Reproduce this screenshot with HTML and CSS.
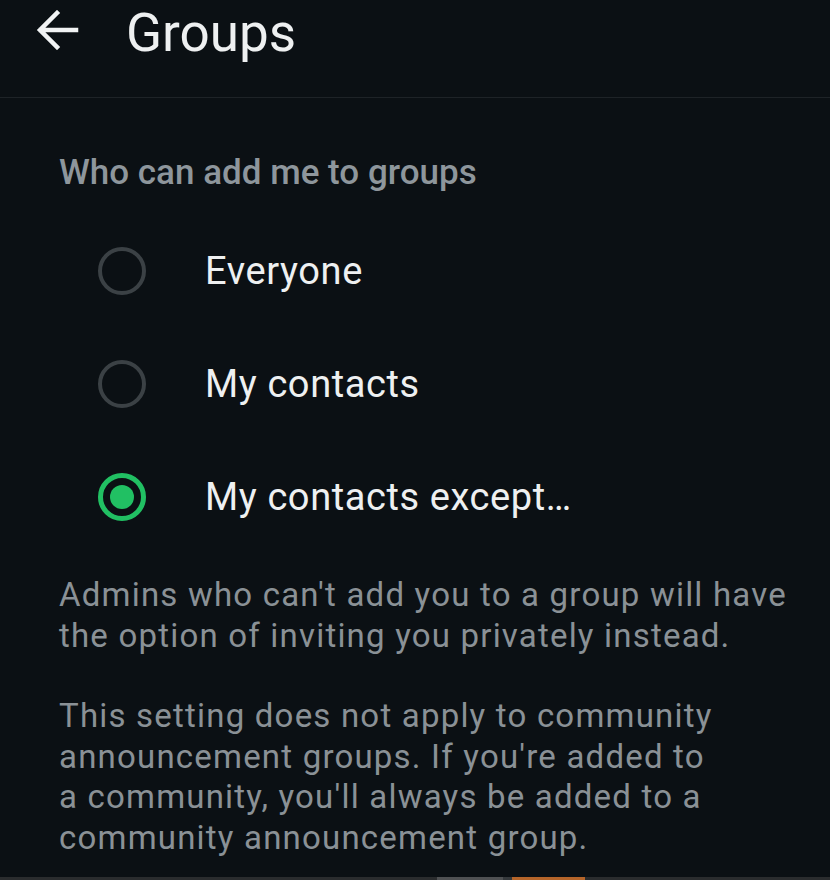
FILE: index.html
```html
<!DOCTYPE html>
<html>
  <head>
    <meta charset="utf8" />
    <title> Groups </title>
    <link rel="stylesheet" href="styles.css">
  </head>
  <body>
    <div class="appbar">
      <svg class="back" width="46" height="40" viewBox="0 0 46 40">
        <path d="M42 20 H7 M23 3 L6 20 L23 37" />
      </svg>
      <h1 class="title">Groups</h1>
    </div>
    <div class="content">
      <h2 class="section">Who can add me to groups</h2>
      <ul class="options">
        <li class="option">
          <span class="radio"></span>
          <span class="label">Everyone</span>
        </li>
        <li class="option">
          <span class="radio"></span>
          <span class="label">My contacts</span>
        </li>
        <li class="option checked">
          <span class="radio"></span>
          <span class="label">My contacts except&hellip;</span>
        </li>
      </ul>
      <p class="note">Admins who can't add you to a group will have<br>the option of inviting you privately instead.</p>
      <p class="note">This setting does not apply to community<br>announcement groups. If you're added to<br>a community, you'll always be added to a<br>community announcement group.</p>
    </div>
    <div class="navbar">
      <span class="seg a"></span>
      <span class="seg b"></span>
      <span class="seg c"></span>
    </div>
  </body>
</html>
```

FILE: styles.css
```css
html, body {
  margin: 0;
  padding: 0;
  background: #0b1014;
  height: 880px;
  overflow: hidden;
}
body {
  font-family: Roboto, "Noto Sans", sans-serif;
  display: flex;
  flex-direction: column;
}

.appbar {
  box-sizing: border-box;
  height: 98px;
  border-bottom: 1px solid #1e2327;
  display: flex;
  align-items: flex-start;
  padding-left: 34px;
}
.back {
  margin-top: 10px;
  fill: none;
  stroke: #f1f3f4;
  stroke-width: 4.5;
  stroke-linecap: square;
}
.title {
  margin: 2px 0 0 46px;
  font-weight: 400;
  font-size: 53px;
  color: #eef0f1;
  line-height: 62px;
}

.content {
  flex: 1;
  padding: 0 20px 0 59px;
}
.section {
  margin: 55px 0 0;
  font-size: 35px;
  font-weight: 500;
  color: #8e969c;
  line-height: 40px;
}
.options {
  list-style: none;
  margin: 21px 0 0;
  padding: 0;
}
.option {
  height: 113px;
  display: flex;
  align-items: center;
  padding-left: 39px;
}
.radio {
  box-sizing: border-box;
  width: 48px;
  height: 48px;
  border: 4.5px solid #3b4145;
  border-radius: 50%;
  flex: none;
  position: relative;
}
.checked .radio {
  border-width: 5px;
  border-color: #21c063;
}
.checked .radio:after {
  content: '';
  position: absolute;
  left: 7px;
  top: 7px;
  width: 24px;
  height: 24px;
  border-radius: 50%;
  background: #21c063;
}
.label {
  margin-left: 59px;
  font-size: 38px;
  letter-spacing: 0.6px;
  color: #eef0f1;
}
.note {
  margin: 22px 0 0;
  font-size: 33px;
  line-height: 40.5px;
  letter-spacing: 1.2px;
  color: #8a9196;
  white-space: nowrap;
}
.note + .note {
  margin-top: 40px;
}

.navbar {
  height: 3px;
  background: #2a2c2e;
  display: flex;
}
.seg.a {
  margin-left: 437px;
  width: 66px;
  background: #4f5153;
}
.seg.b {
  width: 9px;
  background: #35393c;
}
.seg.c {
  width: 73px;
  background: #b5652a;
}
```
